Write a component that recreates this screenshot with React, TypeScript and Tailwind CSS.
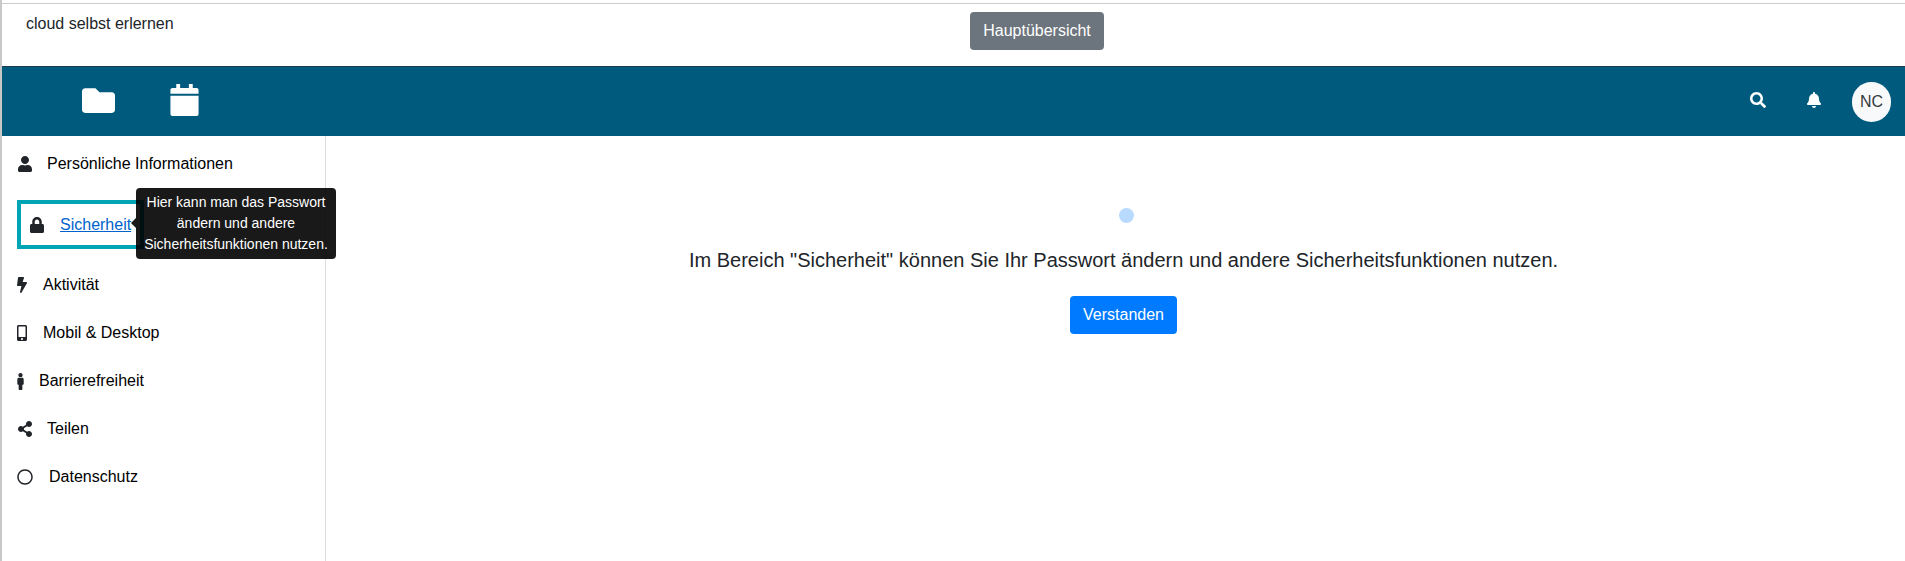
import { FaBell, FaBolt, FaFolder, FaLock, FaMale, FaMobileAlt, FaRegCircle, FaSearch, FaShareAlt, FaUser } from "react-icons/fa";

const ITEMS_BELOW = [
  { label: "Aktivität", icon: <FaBolt size={16} className="-ml-[3px]" />, iconBox: "w-[26px]" },
  { label: "Mobil & Desktop", icon: <FaMobileAlt size={16} className="-ml-[3px]" />, iconBox: "w-[26px]" },
  { label: "Barrierefreiheit", icon: <FaMale size={17} className="-ml-[5px]" />, iconBox: "w-[22px]" },
  { label: "Teilen", icon: <FaShareAlt size={16} />, iconBox: "w-[30px]" },
  { label: "Datenschutz", icon: <FaRegCircle size={16} />, iconBox: "w-[32px]" },
];

function CalendarIcon() {
  return (
    <svg width="29" height="32" viewBox="0 0 29 33" fill="white">
      <rect x="6" y="0" width="4" height="7" />
      <rect x="19" y="0" width="4" height="7" />
      <path d="M2 4h25a2 2 0 0 1 2 2v4H0V6a2 2 0 0 1 2-2z" />
      <path d="M0 12h29v19a2 2 0 0 1-2 2H2a2 2 0 0 1-2-2z" />
    </svg>
  );
}

export default function App() {
  return (
    <div className="h-[561px] overflow-hidden bg-white border-l-2 border-[#c8c8c8] font-['Liberation_Sans',sans-serif] text-[16px] text-[#212529]">
      {/* top strip */}
      <div className="mt-[3px] h-[63px] border-t border-[#cccccc] relative flex justify-center">
        <span className="absolute left-[24px] top-[8px] leading-[24px]">cloud selbst erlernen</span>
        <button className="mt-[8px] ml-[167px] h-[38px] w-[134px] rounded bg-[#6c757d] text-white">Hauptübersicht</button>
      </div>

      {/* header */}
      <div className="h-[70px] bg-[#005a7d] border-t border-[#1f3f50] flex items-center text-white">
        <FaFolder size={33} className="ml-[80px] -mt-[3px]" />
        <div className="ml-[55px] -mt-[3px]"><CalendarIcon /></div>
        <div className="ml-auto flex items-center">
          <FaSearch size={16} className="-mt-[3px]" />
          <FaBell size={16} className="ml-[40px] -mt-[3px]" />
          <div className="ml-[30px] mr-[14px] w-[39px] h-[40px] rounded-full bg-[#f8f9fa] text-[#343a40] flex items-center justify-center">NC</div>
        </div>
      </div>

      <div className="flex h-[425px]">
        {/* sidebar */}
        <div className="w-[324px] border-r border-[#dddddd] pl-[15px] pt-[4px] text-black">
          <div className="h-[48px] flex items-center">
            <span className="w-[30px] text-[#212529]"><FaUser size={16} /></span>
            Persönliche Informationen
          </div>

          <div className="relative mt-[12px] mb-[12px] h-[49px] w-[127px] border-4 border-[#00a5b5] flex items-center pl-[8px]">
            <span className="w-[31px] text-[#212529]"><FaLock size={16} /></span>
            <a className="text-[#0062cc] underline">Sicherheit</a>
            <div className="absolute left-[115px] top-[-16px] w-[200px] h-[71px] z-10 rounded bg-black/90 text-white text-[14px] leading-[21px] text-center flex items-center justify-center">
              <span className="absolute left-[-5px] top-[30px] w-0 h-0 border-y-[5px] border-y-transparent border-r-[5px] border-r-black/90" />
              <span>Hier kann man das Passwort<br />ändern und andere<br />Sicherheitsfunktionen nutzen.</span>
            </div>
          </div>

          {ITEMS_BELOW.map((item) => (
            <div key={item.label} className="h-[48px] flex items-center">
              <span className={`${item.iconBox} text-[#212529]`}>{item.icon}</span>
              {item.label}
            </div>
          ))}
        </div>

        {/* main */}
        <div className="flex-1 flex flex-col items-center pl-[16px] pt-[72px]">
          <div className="ml-[6px] w-[15px] h-[15px] rounded-full bg-[#b8daff]" />
          <p className="mt-[22px] text-[20px] leading-[30px]">Im Bereich "Sicherheit" können Sie Ihr Passwort ändern und andere Sicherheitsfunktionen nutzen.</p>
          <button className="mt-[21px] h-[38px] w-[107px] rounded bg-[#007bff] text-white">Verstanden</button>
        </div>
      </div>
    </div>
  );
}
